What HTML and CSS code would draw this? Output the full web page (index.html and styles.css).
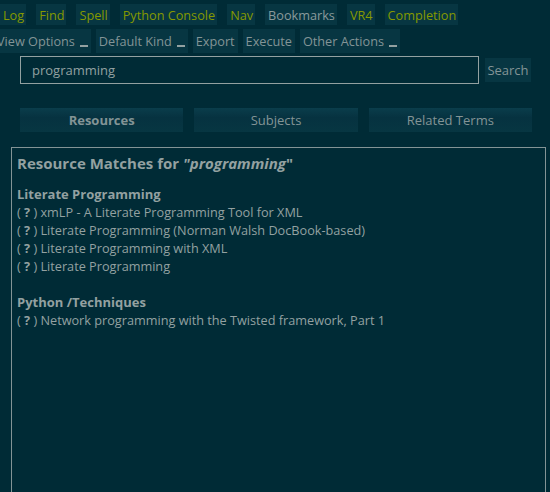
FILE: index.html
```html
<!DOCTYPE html>
<html>
<head>
<meta charset="utf-8">
<link rel="stylesheet" href="styles.css">
</head>
<body>
<div class="toolbar primary">
  <span class="btn">Log</span>
  <span class="btn">Find</span>
  <span class="btn">Spell</span>
  <span class="btn">Python Console</span>
  <span class="btn">Nav</span>
  <span class="btn muted">Bookmarks</span>
  <span class="btn">VR4</span>
  <span class="btn">Completion</span>
</div>
<div class="toolbar secondary">
  <span class="btn">View Options<span class="caret"></span></span>
  <span class="btn">Default Kind<span class="caret"></span></span>
  <span class="btn">Export</span>
  <span class="btn">Execute</span>
  <span class="btn">Other Actions<span class="caret"></span></span>
</div>
<div class="search-row">
  <div class="search-input">programming</div>
  <span class="search-btn">Search</span>
</div>
<div class="tabs">
  <span class="tab active">Resources</span>
  <span class="tab">Subjects</span>
  <span class="tab">Related Terms</span>
</div>
<div class="results">
  <h1 class="title">Resource Matches for <em>"programming</em>"</h1>
  <div class="group">
    <h2 class="group-title">Literate Programming</h2>
    <div class="item"><span class="q">( <b>?</b> )</span> xmLP - A Literate Programming Tool for XML</div>
    <div class="item"><span class="q">( <b>?</b> )</span> Literate Programming (Norman Walsh DocBook-based)</div>
    <div class="item"><span class="q">( <b>?</b> )</span> Literate Programming with XML</div>
    <div class="item"><span class="q">( <b>?</b> )</span> Literate Programming</div>
  </div>
  <div class="group">
    <h2 class="group-title">Python /Techniques</h2>
    <div class="item"><span class="q">( <b>?</b> )</span> Network programming with the Twisted framework, Part 1</div>
  </div>
</div>
</body>
</html>
```
FILE: styles.css
```css
html, body {
  margin: 0;
  padding: 0;
  background: #002b36;
  overflow: hidden;
}
body {
  font-family: "Open Sans", "DejaVu Sans", sans-serif;
  font-size: 12.7px;
  color: #93a1a1;
  width: 550px;
  height: 492px;
}
.toolbar {
  display: flex;
  white-space: nowrap;
}
.primary {
  gap: 10px;
  padding-top: 4px;
}
.primary .btn {
  height: 21px;
  line-height: 23px;
  padding: 0 2px 0 3px;
  background: #073642;
  color: #859900;
}
.primary .btn.muted {
  color: #8a9a9c;
}
.secondary {
  gap: 5px;
  margin-top: 4px;
  margin-left: -6px;
}
.secondary .btn {
  height: 24px;
  line-height: 25px;
  padding: 0 3px;
  background: #073642;
  color: #839496;
}
.caret {
  display: inline-block;
  width: 8px;
  height: 2px;
  background: #93a1a1;
  margin-left: 5px;
  vertical-align: -1px;
}
.search-row {
  display: flex;
  align-items: center;
  margin: 3px 0 0 20px;
  gap: 6px;
}
.search-input {
  width: 446px;
  height: 26px;
  line-height: 26px;
  border: 1px solid #93a1a1;
  padding: 0 0 0 11px;
  font-size: 13px;
  color: #93a1a1;
}
.search-btn {
  width: 46px;
  height: 24px;
  line-height: 24px;
  background: #073642;
  text-align: center;
  font-size: 13px;
  color: #839496;
}
.tabs {
  display: flex;
  gap: 11px;
  margin: 24px 18px 0 20px;
}
.tab {
  flex: 1;
  height: 24px;
  line-height: 24px;
  text-align: center;
  font-size: 13px;
  background: linear-gradient(#0a3d4b, #063240 40%, #073642);
  color: #839496;
}
.tab.active {
  font-weight: bold;
}
.results {
  margin: 15px 4px 0 11px;
  border: 1px solid #839496;
  border-bottom: none;
  height: 336px;
  padding: 4px 5px;
}
.title {
  margin: 0;
  font-size: 15px;
  font-weight: bold;
  line-height: 22px;
  color: #93a1a1;
}
.title em {
  font-style: italic;
}
.group {
  margin-top: 11px;
}
.group + .group {
  margin-top: 18px;
}
.group-title {
  margin: 0;
  font-size: 13px;
  font-weight: bold;
  line-height: 18px;
  color: #93a1a1;
}
.item {
  line-height: 18px;
  color: #93a1a1;
}
.q b {
  font-weight: bold;
}
```
